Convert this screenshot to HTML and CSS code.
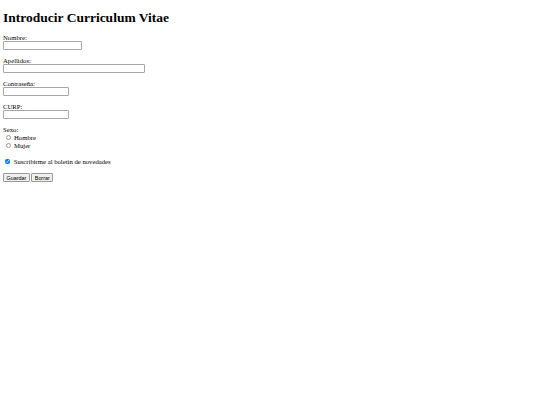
FILE: index.html
```html
<!DOCTYPE html>
<html lang="es">
<head>
<meta charset="utf-8">
<title>Introducir Curriculum Vitae</title>
<link rel="stylesheet" href="styles.css">
</head>
<body>
<h1 class="title">Introducir Curriculum Vitae</h1>
<form class="cv-form">
  <div class="field">
    <label for="nombre" class="label">Nombre:</label>
    <input type="text" id="nombre" class="input input-md">
  </div>
  <div class="field">
    <label for="apellidos" class="label">Apellidos:</label>
    <input type="text" id="apellidos" class="input input-lg">
  </div>
  <div class="field">
    <label for="pass" class="label">Contraseña:</label>
    <input type="password" id="pass" class="input input-sm">
  </div>
  <div class="field">
    <label for="curp" class="label">CURP:</label>
    <input type="text" id="curp" class="input input-sm">
  </div>
  <div class="field">
    <span class="label">Sexo:</span>
    <label class="option"><input type="radio" name="sexo" class="radio"><span>Hombre</span></label>
    <label class="option"><input type="radio" name="sexo" class="radio"><span>Mujer</span></label>
  </div>
  <div class="field field-check">
    <label class="option"><input type="checkbox" class="check" checked><span>Suscribirme al boletín de novedades</span></label>
  </div>
  <div class="buttons">
    <button type="submit" class="btn">Guardar</button>
    <button type="reset" class="btn">Borrar</button>
  </div>
</form>
</body>
</html>
```
FILE: styles.css
```css
html {
  background: #ffffff;
}
body {
  margin: 3px;
  font-family: "Liberation Serif", "Times New Roman", serif;
  font-size: 6.7px;
  line-height: 7.5px;
  color: #000;
}
.title {
  font-size: 13.5px;
  line-height: 15px;
  font-weight: bold;
  margin: 7px 0 8.5px 0;
}
.cv-form {
  display: flex;
  flex-direction: column;
  align-items: flex-start;
}
.field {
  display: flex;
  flex-direction: column;
  align-items: flex-start;
  margin-bottom: 7px;
}
.field-check {
  margin-bottom: 7.5px;
}
.label {
  display: block;
  height: 7.5px;
}
.input {
  font-family: "Liberation Sans", Arial, sans-serif;
  font-size: 5.6px;
  height: 8.5px;
  box-sizing: border-box;
  border: 1px solid #a8a8a8;
  border-radius: 1px;
  padding: 0 1px;
  margin: 0;
  background: #fff;
}
.input-md { width: 79px; }
.input-lg { width: 142px; }
.input-sm { width: 66px; }
.option {
  display: flex;
  align-items: center;
  height: 8.6px;
}
.radio {
  -webkit-appearance: none;
  appearance: none;
  box-sizing: border-box;
  width: 5px;
  height: 5px;
  border: 0.8px solid #9a9a9a;
  border-radius: 50%;
  background: #fff;
  margin: 0 3px 0 3px;
}
.check {
  width: 5.3px;
  height: 5.3px;
  margin: 0 3.4px 0 2px;
}
.buttons {
  display: flex;
  gap: 1.5px;
}
.btn {
  font-family: "Liberation Sans", Arial, sans-serif;
  font-size: 5.4px;
  line-height: 6px;
  height: 8.5px;
  padding: 0 2.5px;
  margin: 0;
  background: #efefef;
  border: 1px solid #9a9a9a;
  border-radius: 1px;
  color: #000;
}
```
